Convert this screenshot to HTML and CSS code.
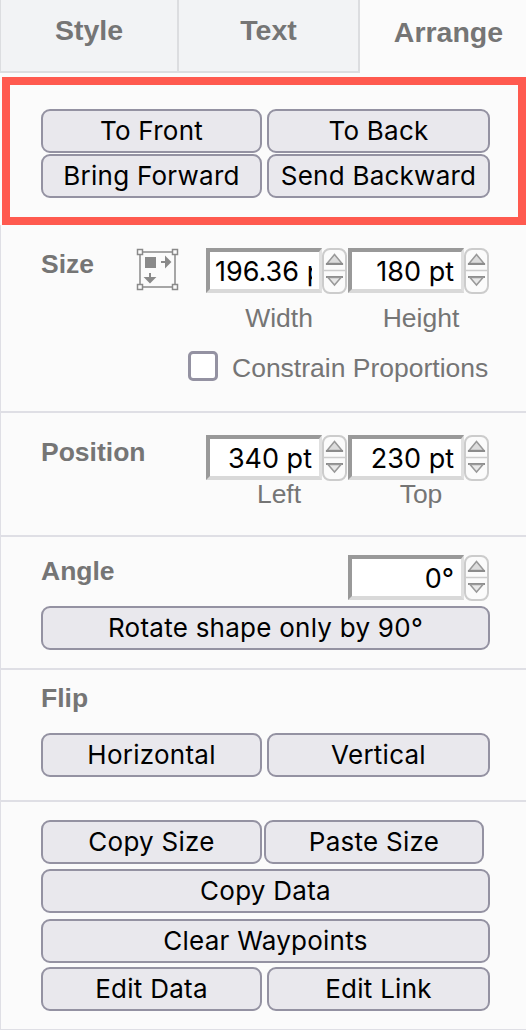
FILE: index.html
```html
<!DOCTYPE html>
<html>
<head>
  <title>Arrange</title>
  <link rel="stylesheet" href="styles.css">
</head>
<body>
  <svg class="defs" width="0" height="0">
    <symbol id="stepper" viewBox="0 0 21 42">
      <path d="M3 13.500H18L10.500 4.500Z" fill="#dcdcdc" stroke="#999" stroke-width="1.500"/>
      <path d="M2 14H19" stroke="#8c8c8c" stroke-width="2"/>
      <path d="M0 20.500H21" stroke="#ccc" stroke-width="1.500"/>
      <path d="M2 27H19" stroke="#8c8c8c" stroke-width="2"/>
      <path d="M4 27.500H17L10.500 35Z" fill="#e8e8e8" stroke="#999" stroke-width="1.500"/>
    </symbol>
  </svg>

  <nav class="tabs">
    <a class="tab">Style</a>
    <a class="tab">Text</a>
    <a class="tab tab-active">Arrange</a>
  </nav>

  <section class="highlight">
    <div class="btn-row">
      <button class="btn">To Front</button>
      <button class="btn">To Back</button>
    </div>
    <div class="btn-row">
      <button class="btn">Bring Forward</button>
      <button class="btn">Send Backward</button>
    </div>
  </section>

  <section class="panel panel-size">
    <div class="head">
      <h3 class="title">Size</h3>
      <svg class="size-icon" width="46" height="44" viewBox="0 0 46 44">
        <g fill="none" stroke="#8a8a8a" stroke-width="1.500">
          <path d="M5 4H39M5 39H39M4 5V38M39 5V38"/>
          <rect x="1.500" y="1.500" width="5" height="5" fill="#fbfbfb"/>
          <rect x="36.500" y="1.500" width="5" height="5" fill="#fbfbfb"/>
          <rect x="1.500" y="36.500" width="5" height="5" fill="#fbfbfb"/>
          <rect x="36.500" y="36.500" width="5" height="5" fill="#fbfbfb"/>
        </g>
        <rect x="9" y="9" width="11" height="11" fill="#8a8a8a"/>
        <path d="M25 14H33M30 10L34 14L30 18V10Z" fill="#8a8a8a" stroke="#8a8a8a" stroke-width="2"/>
        <path d="M14 25V33M10 30L14 34L18 30H10Z" fill="#8a8a8a" stroke="#8a8a8a" stroke-width="2"/>
      </svg>
      <div class="field">
        <div class="spin">
          <input class="num" type="text" value="196.36 pt">
          <svg class="stepper"><use href="#stepper"/></svg>
        </div>
        <div class="caption caption-far">Width</div>
      </div>
      <div class="field">
        <div class="spin">
          <input class="num" type="text" value="180 pt">
          <svg class="stepper"><use href="#stepper"/></svg>
        </div>
        <div class="caption caption-far">Height</div>
      </div>
    </div>
    <label class="check-row">
      <span class="check"></span>
      <span class="check-label">Constrain Proportions</span>
    </label>
  </section>

  <section class="panel panel-position">
    <div class="head">
      <h3 class="title">Position</h3>
      <div class="field">
        <div class="spin">
          <input class="num" type="text" value="340 pt">
          <svg class="stepper"><use href="#stepper"/></svg>
        </div>
        <div class="caption">Left</div>
      </div>
      <div class="field">
        <div class="spin">
          <input class="num" type="text" value="230 pt">
          <svg class="stepper"><use href="#stepper"/></svg>
        </div>
        <div class="caption">Top</div>
      </div>
    </div>
  </section>

  <section class="panel panel-angle">
    <div class="head">
      <h3 class="title">Angle</h3>
      <div class="field">
        <div class="spin">
          <input class="num" type="text" value="0°">
          <svg class="stepper"><use href="#stepper"/></svg>
        </div>
      </div>
    </div>
    <button class="btn btn-wide">Rotate shape only by 90°</button>
  </section>

  <section class="panel panel-flip">
    <h3 class="title flip-title">Flip</h3>
    <div class="btn-row">
      <button class="btn">Horizontal</button>
      <button class="btn">Vertical</button>
    </div>
  </section>

  <section class="panel panel-actions">
    <div class="btn-row btn-row-tight">
      <button class="btn">Copy Size</button>
      <button class="btn">Paste Size</button>
    </div>
    <button class="btn btn-wide">Copy Data</button>
    <button class="btn btn-wide btn-clear">Clear Waypoints</button>
    <div class="btn-row btn-row-last">
      <button class="btn">Edit Data</button>
      <button class="btn">Edit Link</button>
    </div>
  </section>
</body>
</html>
```

FILE: styles.css
```css
body {
  margin: 0;
  padding: 0;
  width: 526px;
  height: 1030px;
  overflow: hidden;
  background: #fbfbfb;
  font-family: "Inter", "Liberation Sans", sans-serif;
}

.defs {
  display: block;
  height: 0;
}

/* tabs */
.tabs {
  display: flex;
  height: 73px;
}

.tab {
  box-sizing: border-box;
  height: 73px;
  padding-top: 10px;
  text-align: center;
  font: bold 28.500px/40px "Liberation Sans", sans-serif;
  color: #757575;
  background: #f2f3f5;
  border-left: 1px solid #dcdde0;
  border-bottom: 2px solid #dcdde0;
}

.tab:nth-child(1) {
  width: 177px;
}

.tab:nth-child(2) {
  width: 183px;
  border-left-width: 2px;
  border-right: 2px solid #dcdde0;
}

.tab-active {
  flex: 1;
  padding: 12px 0 0 11px;
  background: #fbfbfb;
  border: 0;
}

/* red box */
.highlight {
  box-sizing: border-box;
  width: 524px;
  height: 148px;
  margin: 4px 0 0 2px;
  padding: 24px 0 0 31px;
  border: 8px solid #ff5a4f;
}

/* buttons */
.btn {
  display: block;
  box-sizing: border-box;
  height: 44px;
  padding: 0;
  border: 2px solid #9492a2;
  border-radius: 9px;
  background: #e9e8ed;
  color: #000;
  font: 26px/38px "Inter", "Liberation Sans", sans-serif;
  letter-spacing: 0.250px;
}

.btn-row {
  display: grid;
  grid-template-columns: 221px 223px;
  column-gap: 5px;
}

.btn-row + .btn-row {
  margin-top: 1px;
}

.btn-row-tight {
  grid-template-columns: 221px 220px;
  column-gap: 2px;
}

.btn-wide {
  width: 449px;
}

/* sections */
.panel {
  box-sizing: border-box;
  padding: 0 36px 0 40px;
  border-left: 1px solid #dfdfe5;
  border-bottom: 2px solid #dfdfe5;
}

.panel-size {
  height: 188px;
  padding-top: 23px;
}

.panel-position {
  height: 124px;
  padding-top: 22px;
}

.panel-position .title {
  margin-top: 1px;
}

.panel-angle {
  height: 133px;
  padding-top: 18px;
}

.panel-flip {
  height: 132px;
  padding-top: 12px;
}

.panel-actions {
  height: 229px;
  padding-top: 18px;
}

.head {
  display: flex;
  align-items: flex-start;
}

.title {
  margin: 0 auto 0 0;
  font: bold 26.500px/32px "Liberation Sans", sans-serif;
  color: #757575;
}

.flip-title {
  margin-bottom: 19px;
}

.size-icon {
  flex: none;
  margin-right: 24px;
}

/* number fields */
.field {
  flex: none;
  width: 142px;
}

.spin {
  display: flex;
  height: 46px;
}

.num {
  box-sizing: border-box;
  width: 116px;
  height: 45px;
  margin: 0;
  padding: 2px 7px 0 5px;
  border-style: solid;
  border-width: 4px 3px 4px 4px;
  border-color: #999 #e0e0e0 #d9d9d9 #999;
  border-radius: 0;
  outline: 0;
  background: #fff;
  color: #000;
  text-align: right;
  font: 27px "Inter", "Liberation Sans", sans-serif;
}

.stepper {
  box-sizing: border-box;
  width: 25px;
  height: 46px;
  border: 2px solid #ccc;
  border-radius: 8px;
  background: #fbfbfb;
}

.caption {
  width: 146px;
  text-align: center;
  font: 26.500px/26px "Liberation Sans", sans-serif;
  color: #757575;
}

.caption-far {
  margin-top: 11px;
}

/* checkbox */
.check-row {
  display: flex;
  align-items: flex-start;
  margin-left: 147px;
  padding-top: 20px;
}

.check {
  box-sizing: border-box;
  flex: none;
  width: 30px;
  height: 30px;
  margin-right: 14px;
  border: 3px solid #9492a2;
  border-radius: 5px;
  background: #fff;
}

.check-label {
  margin-top: 2px;
  white-space: nowrap;
  font: 26.500px/30px "Liberation Sans", sans-serif;
  color: #757575;
}

.panel-angle .btn-wide {
  margin-top: 5px;
}

.panel-actions .btn-wide {
  margin-top: 5px;
}

.panel-actions .btn-clear {
  margin-top: 6px;
}

.panel-actions .btn-row-last {
  margin-top: 4px;
}
```
